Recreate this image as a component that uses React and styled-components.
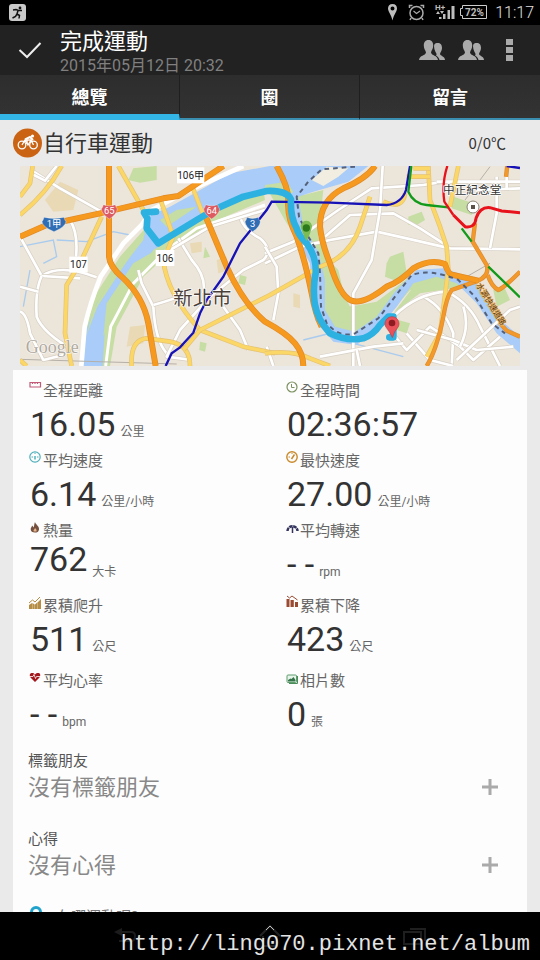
import styled, { createGlobalStyle } from "styled-components";

const GlobalStyle = createGlobalStyle`
  * {
    box-sizing: border-box;
  }
  body {
    margin: 0;
    background: #000;
    font-family: Roboto, "Noto Sans CJK TC", sans-serif;
  }
  button {
    padding: 0;
    border: 0;
    background: none;
    font-family: inherit;
    cursor: pointer;
  }
  svg {
    display: block;
  }
`;

const Page = styled.div`
  height: 100vh;
  display: flex;
  flex-direction: column;
  overflow: hidden;
`;

const StatusBar = styled.div`
  flex: none;
  height: 25px;
  padding: 0 6px 0 9px;
  display: flex;
  align-items: center;
  justify-content: space-between;
  background: #000;
`;

const StatusIcons = styled.div`
  display: flex;
  align-items: center;
`;

const Clock = styled.span`
  margin-left: 6px;
  font-size: 16px;
  line-height: 24px;
  font-weight: 300;
  color: #e0e0e0;
`;

const ActionBar = styled.header`
  flex: none;
  height: 50px;
  padding: 0 20px 0 18px;
  display: flex;
  align-items: center;
  background: #222;
`;

const Titles = styled.div`
  flex: 1;
  margin-left: 18px;
  padding-top: 4px;
`;

const Title = styled.h1`
  margin: 0;
  font-size: 22px;
  line-height: 28px;
  font-weight: 400;
  color: #fff;
`;

const Subtitle = styled.div`
  font-size: 16px;
  line-height: 20px;
  color: #808080;
`;

const Actions = styled.div`
  display: flex;
  align-items: center;
  gap: 13px;
`;

const Tabs = styled.nav`
  flex: none;
  display: grid;
  grid-template-columns: repeat(3, 1fr);
  height: 45px;
  background: linear-gradient(#2d2d2d, #333);
`;

const Tab = styled.button`
  padding-top: ${(p) => (p.$active ? 6 : 2)}px;
  font-size: 18px;
  line-height: 24px;
  font-weight: 700;
  color: #fff;
  border-bottom: ${(p) => (p.$active ? "6px solid #33b5e5" : "2px solid #3a8fb0")};
  border-right: 1px solid #1f1f1f;

  &:last-child {
    border-right: 0;
  }
`;

const Content = styled.main`
  flex: 1;
  min-height: 0;
  padding: 0 13px;
  overflow: hidden;
  background: #eaeaea;
`;

const SportRow = styled.div`
  height: 46px;
  padding-right: 21px;
  display: flex;
  align-items: center;
`;

const SportName = styled.h2`
  flex: 1;
  margin: 0;
  padding-top: 2px;
  font-size: 22px;
  line-height: 28px;
  font-weight: 400;
  color: #333;
`;

const Temperature = styled.span`
  font-family: "Noto Sans CJK TC", sans-serif;
  font-size: 15px;
  line-height: 20px;
  color: #333;
`;

const MapFrame = styled.div`
  height: 200px;
  margin: 0 7px 4px;
`;

const MapSvg = styled.svg`
  width: 100%;
  height: 100%;
`;

const Card = styled.section`
  padding-top: 10px;
  background: #fdfdfd;
`;

const Stats = styled.div`
  display: grid;
  grid-template-columns: 1fr 1fr;
  grid-template-rows: 70px 70px 75px 75px 80px;
`;

const Stat = styled.div`
  padding-left: 16px;
`;

const StatLabel = styled.div`
  display: flex;
  font-size: 15px;
  line-height: 22px;
  color: #666;
`;

const StatIcon = styled.svg`
  width: 14px;
  height: 14px;
`;

const StatLine = styled.div`
  height: 42px;
  padding: 2px 0 0 1px;
  display: flex;
  align-items: flex-end;
  gap: 5px;
`;

const Value = styled.span`
  font-size: 34px;
  line-height: ${(p) => (p.$raised ? 30 : 40)}px;
  align-self: flex-start;
  color: #333;
`;

const Unit = styled.span`
  font-size: 12px;
  line-height: 24px;
  color: #666;
`;

const Field = styled.div`
  height: 78px;
  padding: 0 28px 0 15px;
`;

const FieldLabel = styled.div`
  font-size: 15px;
  line-height: 22px;
  color: #555;
`;

const FieldRow = styled.div`
  height: 32px;
  display: flex;
  align-items: center;
  justify-content: space-between;
`;

const Placeholder = styled.span`
  font-size: 22px;
  line-height: 32px;
  color: #888;
`;

const PlaceRow = styled.div`
  padding-left: 16px;
  display: flex;
  gap: 13px;
  font-size: 15px;
  line-height: 22px;
  color: #777;
`;

const NavBar = styled.footer`
  position: relative;
  flex: none;
  height: 48px;
  display: flex;
  align-items: center;
  justify-content: space-around;
  padding: 0 52px;
  background: #000;
`;

const Watermark = styled.a`
  position: absolute;
  right: 10px;
  bottom: 3px;
  font-family: "Liberation Mono", monospace;
  font-size: 22px;
  line-height: 24px;
  color: #e4e4e4;
  text-decoration: none;
`;

const icons = {
  distance: (
    <path d="M1 7V2.5H11.500V7Z M3.500 2.500V4 M6 2.500V4 M8.500 2.500V4" fill="none" stroke="#c25a78" strokeWidth="1.200" />
  ),
  time: (
    <g fill="none" stroke="#7d9160">
      <circle cx="6" cy="7" r="5" strokeWidth="1.2" />
      <path d="M5.500 4V7.500H8.500" />
    </g>
  ),
  speed: (
    <g fill="none" stroke="#4fb0bb">
      <circle cx="6" cy="7" r="5.200" strokeWidth="1.2" />
      <path d="M6 6V9.500" strokeWidth="1.500" />
      <path d="M2.500 7H4M8 7H9.500M6 3V4" />
    </g>
  ),
  maxSpeed: (
    <g fill="none" stroke="#c98a2b">
      <circle cx="6" cy="7" r="5.200" strokeWidth="1.400" />
      <path d="M8.500 4.500L5.500 9" strokeWidth="1.500" />
      <path d="M2.500 7H4M6 3V4" />
    </g>
  ),
  heat: (
    <g>
      <path
        d="M6 2C6.500 4.500 10.500 6 10 9.500C9.700 12 8 12.500 6 12.500C3.500 12.500 1.500 11.500 1.700 9C1.800 7.500 3 7 3 5.500C4 6 4 7 4.500 7.500C5.500 5.500 5 4 6 2Z"
        fill="#75503f"
      />
      <path d="M6 8C7 9 8 10 7.500 11.500H4.700C4 10 5.500 9.500 6 8Z" fill="#e5b58c" />
    </g>
  ),
  cadence: (
    <g fill="none" stroke="#34345e">
      <path d="M1.500 11A5 4.800 0 0 1 11.500 11" strokeWidth="2.500" strokeDasharray="3.500 0.600" />
      <path d="M6.500 7V13" strokeWidth="1.500" />
    </g>
  ),
  climb: (
    <g>
      <path d="M0 14V10L3 8V14ZM3.300 14V8L5.700 9.500V14ZM6 14V9.500L8.700 7V14ZM9 14V7L12 4V14Z" fill="#b58d45" />
      <path d="M0 8L3.500 5L6 7L11 2" fill="none" stroke="#b58d45" />
    </g>
  ),
  descent: (
    <g>
      <path d="M0.500 4H3.500V12H0.500ZM4.500 5H7.800V12H4.500ZM9 7H12V12H9Z" fill="#9a4b32" />
      <path d="M1 1L3.500 3L6 1L11.500 5" fill="none" stroke="#9a4b32" />
    </g>
  ),
  heart: (
    <g>
      <path d="M6 12L1.500 7.500C0 5 1 3 3.200 3C4.700 3 5.500 3.700 6 4.500C6.500 3.700 7.500 3 9 3C11.200 3 12 5 10.500 7.500Z" fill="#a3181c" />
      <path d="M1 6.500H4L5 4.500L6.500 8.500L7.500 6.500H11" fill="none" stroke="#fff" strokeWidth="0.800" />
    </g>
  ),
  photo: (
    <g>
      <path d="M3 13.500H11.500V6" fill="none" stroke="#4c8c5c" />
      <rect x="1" y="5" width="9.500" height="7.500" rx="1" fill="#e8f5ea" stroke="#5d9e6c" />
      <path d="M2 11.500V10L4.500 8.500L5.500 9L7.500 7L9.500 10V11.500Z" fill="#35744a" />
    </g>
  ),
};

const stats = [
  { icon: "distance", label: "全程距離", value: "16.05", unit: "公里" },
  { icon: "time", label: "全程時間", value: "02:36:57" },
  { icon: "speed", label: "平均速度", value: "6.14", unit: "公里/小時" },
  { icon: "maxSpeed", label: "最快速度", value: "27.00", unit: "公里/小時" },
  { icon: "heat", label: "熱量", value: "762", unit: "大卡", raised: true },
  { icon: "cadence", label: "平均轉速", value: "- -", unit: "rpm" },
  { icon: "climb", label: "累積爬升", value: "511", unit: "公尺" },
  { icon: "descent", label: "累積下降", value: "423", unit: "公尺" },
  { icon: "heart", label: "平均心率", value: "- -", unit: "bpm" },
  { icon: "photo", label: "相片數", value: "0", unit: "張" },
];

const fields = [
  { label: "標籤朋友", text: "沒有標籤朋友" },
  { label: "心得", text: "沒有心得" },
];

function PeopleIcon() {
  return (
    <svg width="26" height="22" viewBox="0 0 26 22" fill="#aaa">
      <path d="M15 7C15 4.500 17 4 19 4C22 4 23 6.500 23 9C23 11.500 21.500 13 21 15C21.500 17 26 17.500 26 21H20.500C20 18.500 18.500 17.500 17 16.500C18 15.500 17.500 14.500 16.500 13C15.500 11 15 9 15 7Z" />
      <path d="M9.500 1C13 1 14.200 3.500 14.200 6.500C14.200 10 12.500 11 12 13.500C12.500 17 18.500 16 19 21H0C0.500 16 6.500 17 7 13.500C6.500 11 4.800 10 4.800 6.500C4.800 3.500 6 1 9.500 1Z" />
    </svg>
  );
}

function StatusGlyphs() {
  return (
    <svg width="102" height="25" viewBox="0 0 102 25" fill="#bdbdbd">
      <path
        fillRule="evenodd"
        d="M5.500 4C8.500 4 10 6 10 8.500C10 11.500 7 14 5.500 20.500C4 14 1 11.500 1 8.500C1 6 2.500 4 5.500 4ZM5.500 6.500A2 2 0 1 0 5.500 10.500A2 2 0 1 0 5.500 6.500Z"
      />
      <g fill="none" stroke="#aaa">
        <circle cx="29.500" cy="13" r="6.500" strokeWidth="1.500" />
        <path d="M26.500 11L29.500 13.500L33 11" strokeWidth="1.200" />
        <path d="M22.500 8V5.500H25.500M33.500 5.500H36.500V8M24 18L23 20M35 18L36 20" strokeWidth="1.500" />
      </g>
      <text x="48" y="10" fontSize="8" fontWeight="700">H+</text>
      <path d="M49 14L51 11L53 14ZM53 11H57L55 14ZM52 17H54.500V19H52ZM56 14H58.500V19H56ZM60.500 10H63V19H60.500ZM64.500 6H67.500V19H64.500Z" />
      <path d="M75.500 5.500H99.500V18.500H75.500V15.500H73.500V8.500H75.500Z" fill="none" stroke="#ccc" />
      <text x="78" y="16" fontSize="10" fontWeight="700">72%</text>
    </svg>
  );
}

// casing below, coloured stroke on top
function Road({ d, color, casing, width }) {
  return (
    <g fill="none" strokeLinejoin="round">
      <path d={d} stroke={casing} strokeWidth={width + 4} />
      <path d={d} stroke={color} strokeWidth={width} />
    </g>
  );
}

const whiteRoads = [
  "M66 18V32L150 85L280 158",
  "M66 42L105 62L140 18",
  "M180 180Q205 220 198 290",
  "M30 230L95 348Q150 310 260 352",
  "M95 348L210 355",
  "M95 348Q75 390 80 470Q100 520 190 570",
  "M30 380L85 395M30 455Q50 460 60 520L100 600L160 585",
  "M505 235L545 300Q590 350 580 400",
  "M470 580Q435 540 430 440L395 370L385 330",
  "M430 435Q500 415 530 400",
  "M640 440L690 510L715 570",
  "M690 170Q700 210 750 235Q790 270 760 300L700 330L600 410L510 510L470 590L545 600",
  "M480 270L600 200L765 150",
  "M765 310L870 260L960 240L1100 215L1190 235L1320 265L1530 268",
  "M765 280L850 245L985 150L1085 85L1240 75L1300 65",
  "M945 230L1020 165L1150 160L1230 205L1300 250",
  "M1030 618L1030 400L1085 300L1110 150L1118 18",
  "M765 260L800 320L805 400L790 480",
  "M1460 50V160L1440 265",
  "M1280 65H1530M1400 90L1530 85M1490 18V90",
  "M1240 410Q1300 440 1330 520L1325 618",
  "M1190 520L1260 600L1330 618",
  "M1150 470Q1220 400 1310 395Q1380 430 1410 500L1470 618",
  "M1130 500L1190 570L1260 500L1350 560L1390 600L1470 530",
  "M1220 510L1330 540L1400 570L1510 560",
  "M1340 600L1500 450L1530 440",
  "M930 590L1090 560L1180 550",
  "M1040 570L1050 618M1360 440Q1380 500 1350 560",
  "M770 560L790 618",
];

const yellowRoads = [
  "M68 18L60 70L30 110",
  "M155 18Q110 100 30 165",
  "M275 170L210 310L170 375L165 520L185 618",
  "M325 18L400 150",
  "M450 115L490 230L460 300Q470 400 570 510L700 560L795 580",
  "M545 75L580 165",
  "M365 618Q360 540 410 535L480 545Q540 555 540 618",
  "M520 570L570 510L780 405L930 320Q1020 290 1050 200L1080 110",
  "M1255 18L1260 120L1290 200L1310 260L1315 330L1290 520L1250 590",
  "M1345 18L1320 140",
  "M1120 125Q1180 150 1185 100M1190 50H1260M1210 25H1260",
  "M765 580Q850 570 900 595L960 618",
  "M30 600L50 618",
];

const orangeRoads = [
  "M30 230L110 195L270 160L460 115L505 108L640 18",
  "M297 18V290Q300 320 335 350Q400 410 415 490L437 618",
  "M585 165L650 320Q700 430 765 485Q830 520 855 550Q880 580 880 618",
  "M800 18Q835 80 835 120Q830 170 860 230Q885 300 905 400Q915 460 935 500",
  "M1095 18Q1070 55 1000 85Q930 120 930 200Q935 250 960 310Q990 410 1025 422Q1060 435 1130 380Q1170 365 1210 325Q1260 295 1305 312Q1315 345 1330 345L1405 362",
];

const thinOrangeRoads = [
  "M1405 362L1325 390Q1310 410 1300 470Q1280 570 1250 618",
  "M1405 362Q1440 345 1430 315L1388 245L1395 190",
  "M1433 345Q1445 380 1465 390Q1480 385 1530 335",
  "M1470 490L1490 512L1530 530",
  "M1492 18L1488 50",
];

const river =
  "M780 18L1075 18L1015 65L910 95L865 110L880 200L925 275L945 360L945 450L975 500L1035 515L1100 470L1155 395L1220 330L1300 325L1390 355L1460 470L1530 530L1530 580L1460 520L1400 430L1340 370L1280 350L1210 370L1160 440L1110 500L1040 555L970 545L915 480L905 390L900 310L850 220L830 110L760 90L680 115L560 180L480 240L430 270L380 340L310 440L285 500L278 618H215L225 520L260 430L330 330L400 240L410 170L480 140L580 85L660 40Z";

const dashes =
  "M1035 20L935 28L895 65L860 110L867 170L895 230L925 280L930 340L933 440L950 490Q990 535 1035 520L1105 475L1155 410L1205 345Q1260 325 1345 360L1395 410L1445 490L1485 520";

const route =
  "M438 155L402 158L412 175L410 205L445 250L560 180L610 150L700 110L770 93Q830 90 843 118Q840 170 860 205Q865 225 890 250Q920 290 917 340Q908 380 914 430Q922 480 960 520Q1010 545 1060 535Q1090 525 1110 495L1135 470H1150V532H1138";

function Label({ x, y, w, children }) {
  return (
    <g>
      <rect x={x} y={y} width={w} height="48" fill="#fff" />
      <text x={x + w / 2} y={y + 35} fontSize="30" textAnchor="middle" fill="#222">
        {children}
      </text>
    </g>
  );
}

function Shield({ x, y, w, color, children }) {
  return (
    <g>
      <path
        transform={`translate(${x - w / 2} ${y - 22})`}
        d={`M6 3Q${w / 2} 10 ${w - 6} 3Q${w - 4} 12 ${w} 16Q${w - 2} 32 ${w / 2} 46Q2 32 0 16Q4 12 6 3Z`}
        fill={color}
        stroke="#fff"
        strokeWidth="1"
      />
      <text x={x} y={y + 10} fontSize="28" textAnchor="middle" fill="#fff">
        {children}
      </text>
    </g>
  );
}

function RouteMap() {
  return (
    <MapSvg viewBox="30 18 1500 600" preserveAspectRatio="xMidYMid slice">
      <rect x="-970" y="18" width="3500" height="600" fill="#ece5da" />
      <g fill="#e9d9b5">
        <path d="M150 65L205 90L190 150L130 155L105 120Z" />
        <path d="M360 500L405 495L400 550L350 560Z" />
        <path d="M850 400L870 405V445L850 440ZM955 360L985 350L990 380Z" />
        <path d="M620 300L650 290L655 330L625 340ZM540 250L575 245V275L545 280Z" />
      </g>
      <g fill="#c6dda3">
        <path d="M370 25L440 18V60L390 68L355 60Z" />
        <path d="M410 200L330 290L240 430L215 618H300L320 500L400 350L510 250L600 190L765 120L760 90L540 150Z" />
        <path d="M765 75L840 70L910 130L905 250L985 330L1010 440L1120 430L1240 330L1400 390L1480 500L1380 380L1200 390L1080 530L960 530L920 400L910 300L830 190Z" />
        <path d="M860 110L940 90L925 230L960 330L1020 440L1100 425L1200 350L1310 340L1200 390L1060 500L960 480L945 350L880 220Z" />
        <path d="M1140 290L1180 275L1190 340L1165 365L1125 350L1130 310Z" />
        <path d="M1195 170L1235 155L1245 180L1220 195H1195ZM1330 110L1390 130L1385 165L1325 145Z" />
        <path d="M1165 480L1200 490L1190 520L1160 510ZM1450 390L1480 375L1500 420L1460 440Z" />
        <path d="M1210 380L1270 365L1330 385L1230 400L1150 460Z" />
        <path d="M585 260L600 290L580 295ZM690 345L710 350L705 375L685 370ZM570 545L590 550L585 575L568 570Z" />
      </g>
      <path d="M30 260L130 240L140 290L100 310M140 240L230 245L310 215L360 225M60 330L40 440M880 540L1000 510M1030 550L1180 590" fill="none" stroke="#a9cbee" strokeWidth="4" />
      <path d={river} fill="#a9ccf8" />
      <path d="M905 60L950 20L1015 25L985 50L940 78Z" fill="#f1ede0" />
      {/* green banks of the lower river */}
      <path d="M765 75L830 65L850 95L830 110L765 92Z" fill="#c6dda3" />
      <path d="M450 180L500 150L560 140L470 200ZM410 215L375 250L300 360L250 450L228 530L262 440L340 320ZM430 275L380 345L310 450L280 530L290 430L370 310Z" fill="#c6dda3" />
      <path d="M214 618L224 500Q240 430 272 350L340 250L395 195L425 150L540 90L700 18" fill="none" stroke="#fff" strokeWidth="14" />
      <path d="M287 618L302 500L370 370L470 270L560 205L765 135" fill="none" stroke="#fff" strokeWidth="9" />
      <path d="M30 598L500 612M1370 350L1440 310M1365 120L1440 20" fill="none" stroke="#b5b0a8" strokeWidth="3" />
      {whiteRoads.map((d) => (
        <Road key={d} d={d} color="#fff" casing="#d6cfc4" width={8} />
      ))}
      {yellowRoads.map((d) => (
        <Road key={d} d={d} color="#fbd768" casing="#e5c272" width={10} />
      ))}
      {thinOrangeRoads.map((d) => (
        <Road key={d} d={d} color="#f3992b" casing="#dd8c30" width={9} />
      ))}
      {orangeRoads.map((d) => (
        <Road key={d} d={d} color="#f6991f" casing="#e08a26" width={14} />
      ))}
      <path d={dashes} fill="none" stroke="#55617a" strokeWidth="6" strokeDasharray="14 12" />

      <g fill="none" strokeWidth="7">
        <path d="M467 618L485 580L510 562L550 518L570 460L590 420L640 350L690 250L770 150L785 125L960 128L1130 135Q1175 130 1188 90L1200 18M1490 18L1530 24" stroke="#1712b5" />
        <path d="M1204 18L1195 95Q1210 130 1250 135L1315 142M1355 205L1385 245M1435 320L1530 412" stroke="#129a1b" />
        <path d="M1312 18Q1295 70 1303 125L1330 165" stroke="#e8121b" />
        <path d="M1330 165L1365 200Q1395 205 1398 175Q1410 140 1440 143L1475 153L1530 158" stroke="#e8121b" strokeWidth="9" />
      </g>
      <path d={route} fill="none" stroke="#2cb1e1" strokeWidth="20" strokeLinejoin="round" strokeLinecap="round" />

      <path d="M873 205A17 17 0 1 1 905 205Q900 225 889 244Q880 225 873 205Z" fill="#7dbb55" />
      <circle cx="889" cy="204" r="11" fill="#2d7a1d" />
      <path d="M1127 500A21 21 0 1 1 1165 500Q1152 515 1147 533Q1140 515 1127 500Z" fill="#e8525a" stroke="#c23b42" strokeWidth="2" />
      <circle cx="1146" cy="489" r="10" fill="#8c1c20" />
      <circle cx="1389" cy="141" r="18" fill="#fff" stroke="#8a8378" strokeWidth="3" />
      <rect x="1383" y="135" width="12" height="12" fill="#5c5148" />

      <Label x={501} y={22} w={82}>106甲</Label>
      <Label x={178} y={290} w={55}>107</Label>
      <Label x={437} y={270} w={56}>106</Label>
      <Shield x={132} y={191} w={72} color="#2f6db5">1甲</Shield>
      <Shield x={298} y={153} w={48} color="#dd5a62">65</Shield>
      <Shield x={605} y={153} w={48} color="#dd5a62">64</Shield>
      <Shield x={728} y={191} w={46} color="#2f6db5">3</Shield>
      <g fill="#4a4038" stroke="#fff" strokeWidth="4" paintOrder="stroke">
        <text x="490" y="435" fontSize="58">新北市</text>
        <text x="1299" y="103" fontSize="35" fill="#333">中正紀念堂</text>
        <text transform="translate(1398 376) rotate(58)" fontSize="24" fill="#5a3a10" stroke="#f3c27a">
          水源快速道路
        </text>
      </g>
      <text x="47" y="580" fontFamily="Liberation Serif, serif" fontSize="54" fill="#b0aaa0" stroke="#fff" strokeWidth="3" paintOrder="stroke">
        Google
      </text>
    </MapSvg>
  );
}

function BikeIcon() {
  return (
    <svg width="30" height="30" viewBox="0 0 30 30">
      <circle cx="14.500" cy="15" r="14.500" fill="#ca6314" />
      <g fill="none" stroke="#fff" strokeWidth="1.300">
        <circle cx="9" cy="17" r="3.800" />
        <circle cx="20.500" cy="17" r="3.800" />
        <path d="M9 17L12 12H18L20.500 17M12 12L15 17L18 12" />
        <path d="M12 11.500L17 9L20 12" strokeWidth="2" />
        <path d="M14 12V16" strokeWidth="1.500" />
      </g>
      <circle cx="19.500" cy="8" r="1.600" fill="#fff" />
    </svg>
  );
}

export default function App() {
  return (
    <Page>
      <GlobalStyle />
      <StatusBar>
        <svg width="17" height="17" viewBox="0 0 17 17">
          <rect width="17" height="17" rx="3" fill="#c9c9c9" />
          <circle cx="11" cy="4" r="1.400" fill="#111" />
          <path d="M4 6L7 5.500L9.500 6.500L13 6.500M9 6.500L8 10L10.500 11.500L10 14.500M8 10L6.500 12.500L3.500 14" fill="none" stroke="#111" strokeWidth="1.500" />
        </svg>
        <StatusIcons>
          <StatusGlyphs />
          <Clock>11:17</Clock>
        </StatusIcons>
      </StatusBar>

      <ActionBar>
        <button aria-label="完成">
          <svg width="24" height="20" viewBox="0 0 24 20">
            <path d="M1.500 10L9 17L22.500 3" fill="none" stroke="#eee" strokeWidth="2" />
          </svg>
        </button>
        <Titles>
          <Title>完成運動</Title>
          <Subtitle>2015年05月12日 20:32</Subtitle>
        </Titles>
        <Actions>
          <button aria-label="朋友">
            <PeopleIcon />
          </button>
          <button aria-label="群組">
            <PeopleIcon />
          </button>
          <button aria-label="更多">
            <svg width="23" height="24" viewBox="0 0 23 24" fill="#aaa">
              <path d="M9 1H16V7H9ZM9 9H16V15H9ZM9 17H16V23H9Z" />
            </svg>
          </button>
        </Actions>
      </ActionBar>

      <Tabs>
        <Tab $active>總覽</Tab>
        <Tab>圈</Tab>
        <Tab>留言</Tab>
      </Tabs>

      <Content>
        <SportRow>
          <BikeIcon />
          <SportName>自行車運動</SportName>
          <Temperature>0/0℃</Temperature>
        </SportRow>
        <MapFrame>
          <RouteMap />
        </MapFrame>
        <Card>
          <Stats>
            {stats.map((s) => (
              <Stat key={s.label}>
                <StatLabel>
                  <StatIcon viewBox="0 0 14 14">{icons[s.icon]}</StatIcon>
                  {s.label}
                </StatLabel>
                <StatLine>
                  <Value $raised={s.raised}>{s.value}</Value>
                  {s.unit && <Unit>{s.unit}</Unit>}
                </StatLine>
              </Stat>
            ))}
          </Stats>
          {fields.map((f) => (
            <Field key={f.label}>
              <FieldLabel>{f.label}</FieldLabel>
              <FieldRow>
                <Placeholder>{f.text}</Placeholder>
                <button aria-label={f.label}>
                  <svg width="18" height="18" viewBox="0 0 18 18">
                    <path d="M9 0V16M1 8H17" stroke="#aaa" strokeWidth="3" />
                  </svg>
                </button>
              </FieldRow>
            </Field>
          ))}
          <PlaceRow>
            <svg width="14" height="22" viewBox="0 0 14 22">
              <path d="M2 9L7 18L12 9Z" fill="#1fa3cc" />
              <circle cx="7" cy="6" r="4.500" fill="#fdfdfd" stroke="#1fa3cc" strokeWidth="3" />
            </svg>
            在哪運動呢?
          </PlaceRow>
        </Card>
      </Content>

      <NavBar>
        <button aria-label="返回">
          <svg width="24" height="20" viewBox="0 0 24 20" fill="none" stroke="#1c1c1c" strokeWidth="2">
            <path d="M4 6H18Q22 6 22 10Q22 15 18 15H6" />
            <path d="M1 6L9 2V10Z" fill="#1c1c1c" stroke="none" />
          </svg>
        </button>
        <button aria-label="主畫面">
          <svg width="24" height="24" viewBox="0 0 24 24" fill="none">
            <path d="M2 12L12 2L22 12M5 12V22H19V12" stroke="#222" strokeWidth="2" />
            <path d="M8 6L12 2L16 6" stroke="#bbb" />
          </svg>
        </button>
        <button aria-label="最近">
          <svg width="24" height="18" viewBox="0 0 24 18" fill="none" stroke="#1f1f1f" strokeWidth="2">
            <path d="M1 5H18V17H1ZM7 2H22V14" />
          </svg>
        </button>
        <Watermark href="http://ling070.pixnet.net/album">http://ling070.pixnet.net/album</Watermark>
      </NavBar>
    </Page>
  );
}
